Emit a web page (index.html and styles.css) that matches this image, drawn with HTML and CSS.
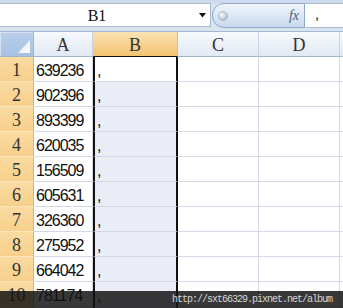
FILE: index.html
```html
<!DOCTYPE html>
<html>
<head>
<meta charset="utf-8">
<link rel="stylesheet" href="styles.css">
</head>
<body>
<div class="app">
  <div class="fbar">
    <div class="namebox">
      <span class="name">B1</span>
      <svg class="dd" width="8" height="5" viewBox="0 0 8 5"><path d="M0 0H7L3.5 4.5Z" fill="#111"/></svg>
    </div>
    <div class="fxcap">
      <span class="knob"></span>
      <span class="fx">fx</span>
    </div>
    <div class="finput">,</div>
  </div>
  <div class="grid">
    <div class="corner"><svg width="34" height="24" viewBox="0 0 34 24"><defs><linearGradient id="tg" x1="0" y1="0" x2="1" y2="1"><stop offset="0" stop-color="#dfe9f6"/><stop offset="1" stop-color="#ffffff"/></linearGradient></defs><path d="M18 21H30V8Z" fill="url(#tg)"/></svg></div>
    <div class="ch">A</div>
    <div class="ch sel">B</div>
    <div class="ch">C</div>
    <div class="ch">D</div>
    <div class="ch"></div>

    <div class="rh">1</div><div class="c">639236</div><div class="c b active">,</div><div class="c"></div><div class="c"></div><div class="c"></div>
    <div class="rh">2</div><div class="c">902396</div><div class="c b">,</div><div class="c"></div><div class="c"></div><div class="c"></div>
    <div class="rh">3</div><div class="c">893399</div><div class="c b">,</div><div class="c"></div><div class="c"></div><div class="c"></div>
    <div class="rh">4</div><div class="c">620035</div><div class="c b">,</div><div class="c"></div><div class="c"></div><div class="c"></div>
    <div class="rh">5</div><div class="c">156509</div><div class="c b">,</div><div class="c"></div><div class="c"></div><div class="c"></div>
    <div class="rh">6</div><div class="c">605631</div><div class="c b">,</div><div class="c"></div><div class="c"></div><div class="c"></div>
    <div class="rh">7</div><div class="c">326360</div><div class="c b">,</div><div class="c"></div><div class="c"></div><div class="c"></div>
    <div class="rh">8</div><div class="c">275952</div><div class="c b">,</div><div class="c"></div><div class="c"></div><div class="c"></div>
    <div class="rh">9</div><div class="c">664042</div><div class="c b">,</div><div class="c"></div><div class="c"></div><div class="c"></div>
    <div class="rh">10</div><div class="c">781174</div><div class="c b">,</div><div class="c"></div><div class="c"></div><div class="c"></div>
    <div class="rh"></div><div class="c"></div><div class="c b"></div><div class="c"></div><div class="c"></div><div class="c"></div>
  </div>
  <div class="watermark">http://sxt66329.pixnet.net/album</div>
</div>
</body>
</html>
```

FILE: styles.css
```css
html, body {
  margin: 0;
  padding: 0;
  background: #ffffff;
}

.app {
  position: relative;
  width: 343px;
  height: 308px;
  overflow: hidden;
}

/* formula bar */
.fbar {
  height: 31px;
  box-sizing: border-box;
  display: flex;
  align-items: flex-start;
  padding-top: 3px;
  background: linear-gradient(#cddbed 0, #cddbed 3px, #d9e4f1 3px, #d9e4f1 100%);
}

.namebox {
  width: 211px;
  height: 24px;
  box-sizing: border-box;
  background: #ffffff;
  border-top: 1px solid #a9bcd4;
  border-bottom: 1px solid #a9bcd4;
  border-right: 1px solid #a9bcd4;
  display: flex;
  align-items: center;
  position: relative;
}

.name {
  width: 194px;
  text-align: center;
  font-family: "Liberation Serif", serif;
  font-size: 16px;
  color: #111;
  padding-top: 1px;
}

.dd {
  margin-left: 5px;
  margin-top: 1px;
}

.fxcap {
  margin-left: 1px;
  width: 93px;
  height: 25px;
  box-sizing: border-box;
  border: 1px solid #8ea8c9;
  border-radius: 12px 0 0 12px;
  background: linear-gradient(#f1f5fb, #dbe6f4 55%, #c8d8ee);
  display: flex;
  align-items: center;
  padding-left: 5px;
}

.knob {
  width: 8px;
  height: 8px;
  border-radius: 50%;
  background: radial-gradient(circle at 35% 35%, #ffffff, #b3c0d0 70%);
  border: 1px solid #aab7c8;
}

.fx {
  margin-left: auto;
  margin-right: 5px;
  font-family: "Liberation Serif", serif;
  font-style: italic;
  font-size: 14px;
  color: #4d5e77;
}

.finput {
  flex: 1;
  height: 25px;
  box-sizing: border-box;
  background: #ffffff;
  border-top: 1px solid #a9bcd4;
  border-bottom: 1px solid #a9bcd4;
  font-family: "Liberation Sans", sans-serif;
  font-size: 15px;
  line-height: 20px;
  padding-left: 10px;
  color: #111;
}

/* sheet */
.grid {
  display: grid;
  grid-template-columns: 34px 59px 85px 81px 81px 20px;
  grid-auto-rows: 25px;
  border-top: 1px solid #a3b9d3;
}

.grid > div {
  box-sizing: border-box;
}

.corner {
  background: linear-gradient(#b9cfea, #a7c1e4);
  border-right: 1px solid #9eb6ce;
  border-bottom: 1px solid #9eb6ce;
  box-shadow: inset 1px 1px 0 #d3e1f3;
  overflow: hidden;
}

.corner svg {
  display: block;
}

.ch {
  background: linear-gradient(#f8fafd, #e9eff7 60%, #e1e9f4);
  border-right: 1px solid #c5d3e4;
  border-bottom: 1px solid #9eb6ce;
  font-family: "Liberation Serif", serif;
  font-size: 18px;
  line-height: 24px;
  padding-top: 1px;
  text-align: center;
  color: #333;
}

.ch.sel {
  background: linear-gradient(#fbe2b4, #f7d392 50%, #f2c471);
  border-right: 1px solid #e9bb6a;
  border-bottom: 1px solid #111;
}

.rh {
  background: linear-gradient(#fadba2, #f7d08c);
  border-right: 1px solid #e3b264;
  border-bottom: 1px solid #fbe5bd;
  font-family: "Liberation Serif", serif;
  font-size: 18px;
  line-height: 24px;
  padding-top: 1px;
  text-align: center;
  color: #333;
}

.c {
  border-right: 1px solid #d3d9e6;
  border-bottom: 1px solid #d3d9e6;
  font-family: "Liberation Sans", sans-serif;
  font-size: 16px;
  letter-spacing: -1px;
  line-height: 24px;
  padding-top: 2px;
  padding-left: 2px;
  color: #111;
  white-space: nowrap;
}

.c.b {
  border-left: 2px solid #111;
  border-right: 2px solid #111;
  border-bottom-color: #d0d6e6;
  background: #eaedf6;
}

.c.b.active {
  background: #ffffff;
}

/* overlay watermark */
.watermark {
  position: absolute;
  left: 0;
  right: 0;
  top: 291px;
  height: 17px;
  background: rgba(18, 18, 18, 0.84);
  color: #d6d6d6;
  font-family: "Liberation Mono", monospace;
  font-size: 10px;
  letter-spacing: -1px;
  line-height: 17px;
  text-align: right;
  padding-right: 11px;
  box-sizing: border-box;
}
```
